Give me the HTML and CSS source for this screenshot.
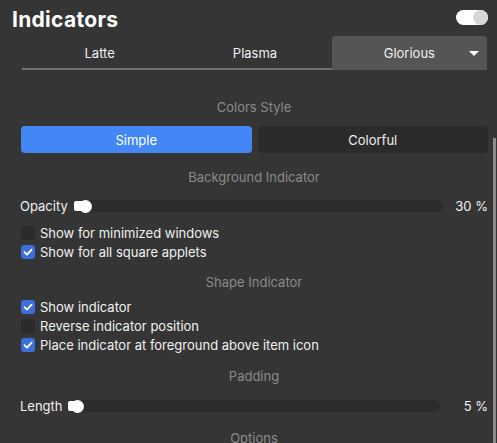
FILE: index.html
```html
<!DOCTYPE html>
<html>
<head>
<meta charset="utf-8">
<link rel="stylesheet" href="styles.css">
</head>
<body>
<div class="page">
  <header class="header">
    <h1 class="title">Indicators</h1>
    <div class="toggle"><span class="knob"></span></div>
  </header>
  <nav class="tabs">
    <div class="tab">Latte</div>
    <div class="tab">Plasma</div>
    <div class="tab tab-active">Glorious<span class="caret"></span></div>
  </nav>
  <div class="main">
    <div class="content">
      <div class="section-title first">Colors Style</div>
      <div class="btn-row">
        <div class="btn btn-primary">Simple</div>
        <div class="btn">Colorful</div>
      </div>

      <div class="section-title">Background Indicator</div>
      <div class="slider-row">
        <span class="label">Opacity</span>
        <div class="track"><span class="fill"></span><span class="thumb"></span></div>
        <span class="value">30 %</span>
      </div>
      <div class="checks">
        <label class="check"><span class="box"></span>Show for minimized windows</label>
        <label class="check"><span class="box on"><svg viewBox="0 0 14 14" width="14" height="14"><path d="M3.5 7.2 L6 9.6 L10.6 4.6" fill="none" stroke="#fff" stroke-width="1.8" stroke-linecap="round" stroke-linejoin="round"/></svg></span>Show for all square applets</label>
      </div>

      <div class="section-title shape">Shape Indicator</div>
      <div class="checks tight">
        <label class="check"><span class="box on"><svg viewBox="0 0 14 14" width="14" height="14"><path d="M3.5 7.2 L6 9.6 L10.6 4.6" fill="none" stroke="#fff" stroke-width="1.8" stroke-linecap="round" stroke-linejoin="round"/></svg></span>Show indicator</label>
        <label class="check"><span class="box"></span>Reverse indicator position</label>
        <label class="check"><span class="box on"><svg viewBox="0 0 14 14" width="14" height="14"><path d="M3.5 7.2 L6 9.6 L10.6 4.6" fill="none" stroke="#fff" stroke-width="1.8" stroke-linecap="round" stroke-linejoin="round"/></svg></span>Place indicator at foreground above item icon</label>
      </div>

      <div class="section-title padding">Padding</div>
      <div class="slider-row slider-len">
        <span class="label">Length</span>
        <div class="track track-len"><span class="fill fill-len"></span><span class="thumb"></span></div>
        <span class="value value-len">5 %</span>
      </div>

      <div class="section-title last">Options</div>
    </div>
    <div class="scrollbar"><span class="scroll-thumb"></span></div>
  </div>
</div>
</body>
</html>
```

FILE: styles.css
```css
* { box-sizing: border-box; }
html, body {
  margin: 0;
  padding: 0;
  background: #353535;
  height: 100%;
  overflow: hidden;
}
body {
  font-family: Inter, "Noto Sans", sans-serif;
  font-size: 13px;
  color: #f2f2f2;
}
.page {
  display: flex;
  flex-direction: column;
  height: 443px;
}
.header {
  display: flex;
  align-items: center;
  justify-content: space-between;
  height: 36px;
  padding: 3px 9px 0 12px;
}
.title {
  margin: 0;
  font-size: 21px;
  font-weight: 700;
  letter-spacing: 0.3px;
  color: #ffffff;
}
.toggle {
  width: 32px;
  height: 15px;
  border-radius: 8px;
  background: #ffffff;
  display: flex;
  justify-content: flex-end;
  margin-top: -4px;
}
.knob {
  width: 15px;
  height: 15px;
  border-radius: 50%;
  background: #d6d6d6;
}
.tabs {
  display: flex;
  margin: 0 10px 0 22px;
  height: 34px;
  border-bottom: 2px solid #707070;
}
.tab {
  flex: 1;
  display: flex;
  align-items: center;
  justify-content: center;
  color: #f0f0f0;
  padding-top: 2px;
}
.tab-active {
  position: relative;
  background: #555555;
  border-radius: 4px 4px 0 0;
  margin-left: -1px;
  margin-bottom: -2px;
  padding-top: 0;
}
.caret {
  position: absolute;
  right: 8px;
  top: 15px;
  width: 0;
  height: 0;
  border-left: 5px solid transparent;
  border-right: 5px solid transparent;
  border-top: 5px solid #ffffff;
}
.main {
  flex: 1;
  display: flex;
  min-height: 0;
}
.content {
  flex: 1;
  padding: 0 5px 0 20px;
  overflow: hidden;
}
.scrollbar {
  width: 3px;
  margin-right: 1px;
  display: flex;
  flex-direction: column;
}
.scroll-thumb {
  margin-top: 68px;
  flex: 1;
  background: #8a8a8a;
}
.section-title {
  height: 20px;
  line-height: 20px;
  text-align: center;
  color: #8a8a8a;
  margin-top: 14px;
}
.section-title.first { margin-top: 27px; }
.section-title.shape { margin-top: 11px; }
.section-title.padding { margin-top: 12px; }
.section-title.last { margin-top: 12px; }
.btn-row {
  display: flex;
  gap: 6px;
  margin-top: 9px;
  padding-left: 1px;
}
.btn {
  flex: 1;
  height: 27px;
  border-radius: 4px;
  background: #2b2b2b;
  display: flex;
  align-items: center;
  justify-content: center;
  color: #f0f0f0;
}
.btn-primary {
  background: #4287f5;
  color: #ffffff;
}
.slider-row {
  display: flex;
  align-items: center;
  height: 20px;
  margin-top: 9px;
}
.slider-row.slider-len { margin-top: 10px; }
.label { color: #f0f0f0; }
.track {
  flex: 1;
  height: 12px;
  margin-left: 6px;
  border-radius: 6px;
  background: #2c2c2c;
  display: flex;
  align-items: center;
}
.track-len { margin-left: 5px; }
.fill {
  width: 8px;
  height: 10px;
  background: #ffffff;
  border-radius: 2px 0 0 2px;
}
.fill-len { width: 6px; }
.thumb {
  width: 13px;
  height: 13px;
  border-radius: 50%;
  background: #ffffff;
  margin-left: -3px;
}
.value {
  width: 45px;
  text-align: right;
  color: #f0f0f0;
}
.value-len { width: 48px; }
.checks {
  display: flex;
  flex-direction: column;
  margin-top: 7px;
}
.checks.tight { margin-top: 5px; }
.check {
  display: flex;
  align-items: center;
  height: 19px;
  gap: 5px;
  padding-left: 1px;
  color: #f0f0f0;
}
.box {
  width: 14px;
  height: 14px;
  border-radius: 3px;
  background: #2b2b2b;
  display: flex;
}
.box.on { background: #3c6fd9; }
```
